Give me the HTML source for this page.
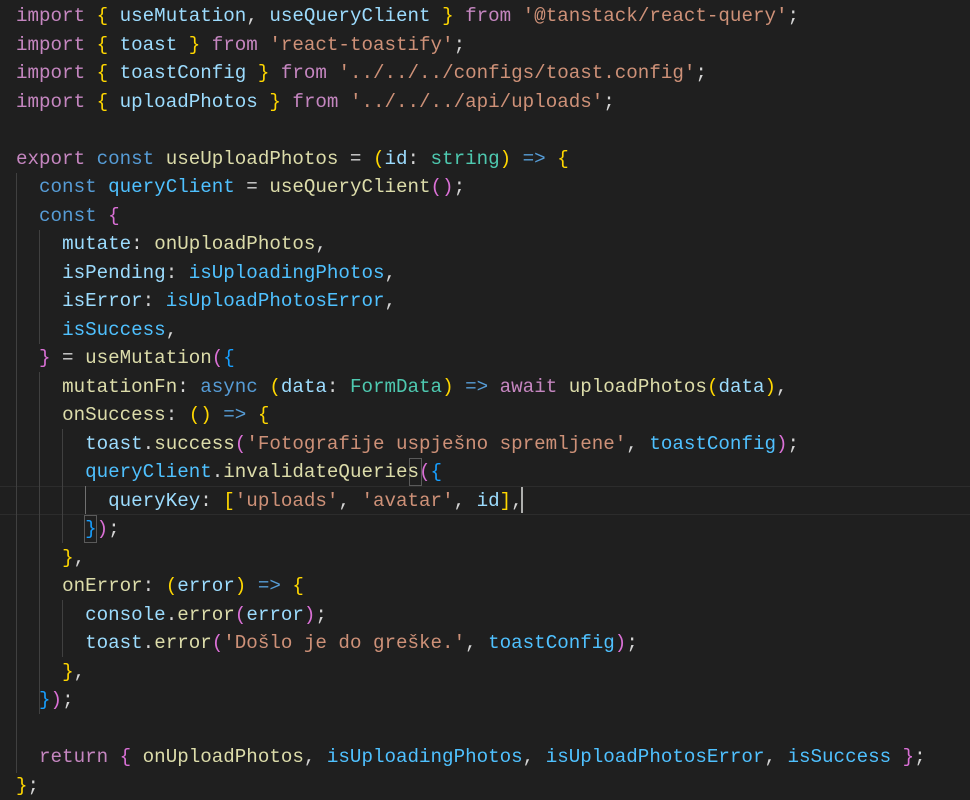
<!DOCTYPE html>
<html><head><meta charset="utf-8"><style>
html,body{margin:0;padding:0;background:#1f1f1f;width:970px;height:795px;overflow:hidden}
#c{position:absolute;left:16px;top:2px;font-family:"Liberation Mono",monospace;font-size:19.2px;line-height:28.5px;color:#d4d4d4;white-space:pre}
.k{color:#c586c0}.b{color:#569cd6}.v{color:#9cdcfe}.c{color:#4fc1ff}.f{color:#dcdcaa}.s{color:#ce9178}.t{color:#4ec9b0}
.y{color:#ffd700}.p{color:#da70d6}.u{color:#179fff}
.g{position:absolute;width:1px;background:#404040}
.hl{position:absolute;left:0;width:970px;top:486px;height:27px;border-top:1px solid #2c2c2c;border-bottom:1px solid #2c2c2c}
.cur{position:absolute;left:521px;top:487px;width:2px;height:26px;background:#aeafad}
.bx{position:absolute;border:1px solid #5a5a5a;width:11px;height:26px}
</style></head><body>
<div class="hl"></div>
<div class="g" style="left:16px;top:173px;height:600px"></div>
<div class="g" style="left:39px;top:230px;height:114px"></div>
<div class="g" style="left:39px;top:372px;height:342px"></div>
<div class="g" style="left:62px;top:429px;height:114px"></div>
<div class="g" style="left:62px;top:600px;height:57px"></div>
<div class="g" style="left:85px;top:486px;height:28px;background:#707070"></div>
<div class="bx" style="left:409px;top:458px"></div>
<div class="bx" style="left:84px;top:515px"></div>
<div class="cur"></div>
<div id="c"><span class="k">import</span> <span class="y">{</span> <span class="v">useMutation</span>, <span class="v">useQueryClient</span> <span class="y">}</span> <span class="k">from</span> <span class="s">'@tanstack/react-query'</span>;
<span class="k">import</span> <span class="y">{</span> <span class="v">toast</span> <span class="y">}</span> <span class="k">from</span> <span class="s">'react-toastify'</span>;
<span class="k">import</span> <span class="y">{</span> <span class="v">toastConfig</span> <span class="y">}</span> <span class="k">from</span> <span class="s">'../../../configs/toast.config'</span>;
<span class="k">import</span> <span class="y">{</span> <span class="v">uploadPhotos</span> <span class="y">}</span> <span class="k">from</span> <span class="s">'../../../api/uploads'</span>;

<span class="k">export</span> <span class="b">const</span> <span class="f">useUploadPhotos</span> = <span class="y">(</span><span class="v">id</span>: <span class="t">string</span><span class="y">)</span> <span class="b">=&gt;</span> <span class="y">{</span>
  <span class="b">const</span> <span class="c">queryClient</span> = <span class="f">useQueryClient</span><span class="p">()</span>;
  <span class="b">const</span> <span class="p">{</span>
    <span class="v">mutate</span>: <span class="f">onUploadPhotos</span>,
    <span class="v">isPending</span>: <span class="c">isUploadingPhotos</span>,
    <span class="v">isError</span>: <span class="c">isUploadPhotosError</span>,
    <span class="c">isSuccess</span>,
  <span class="p">}</span> = <span class="f">useMutation</span><span class="p">(</span><span class="u">{</span>
    <span class="f">mutationFn</span>: <span class="b">async</span> <span class="y">(</span><span class="v">data</span>: <span class="t">FormData</span><span class="y">)</span> <span class="b">=&gt;</span> <span class="k">await</span> <span class="f">uploadPhotos</span><span class="y">(</span><span class="v">data</span><span class="y">)</span>,
    <span class="f">onSuccess</span>: <span class="y">()</span> <span class="b">=&gt;</span> <span class="y">{</span>
      <span class="v">toast</span>.<span class="f">success</span><span class="p">(</span><span class="s">'Fotografije uspješno spremljene'</span>, <span class="c">toastConfig</span><span class="p">)</span>;
      <span class="c">queryClient</span>.<span class="f">invalidateQueries</span><span class="p">(</span><span class="u">{</span>
        <span class="v">queryKey</span>: <span class="y">[</span><span class="s">'uploads'</span>, <span class="s">'avatar'</span>, <span class="v">id</span><span class="y">]</span>,
      <span class="u">}</span><span class="p">)</span>;
    <span class="y">}</span>,
    <span class="f">onError</span>: <span class="y">(</span><span class="v">error</span><span class="y">)</span> <span class="b">=&gt;</span> <span class="y">{</span>
      <span class="v">console</span>.<span class="f">error</span><span class="p">(</span><span class="v">error</span><span class="p">)</span>;
      <span class="v">toast</span>.<span class="f">error</span><span class="p">(</span><span class="s">'Došlo je do greške.'</span>, <span class="c">toastConfig</span><span class="p">)</span>;
    <span class="y">}</span>,
  <span class="u">}</span><span class="p">)</span>;

  <span class="k">return</span> <span class="p">{</span> <span class="f">onUploadPhotos</span>, <span class="c">isUploadingPhotos</span>, <span class="c">isUploadPhotosError</span>, <span class="c">isSuccess</span> <span class="p">}</span>;
<span class="y">}</span>;</div>
</body></html>
